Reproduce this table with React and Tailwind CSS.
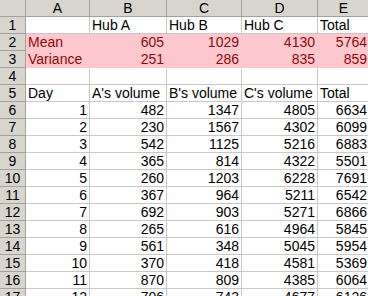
const cols = ['A', 'B', 'C', 'D', 'E'];

const rows = [
  ['', 'Hub A', 'Hub B', 'Hub C', 'Total'],
  ['Mean', 605, 1029, 4130, 5764],
  ['Variance', 251, 286, 835, 859],
  ['', '', '', '', ''],
  ['Day', "A's volume", "B's volume", "C's volume", 'Total'],
  [1, 482, 1347, 4805, 6634],
  [2, 230, 1567, 4302, 6099],
  [3, 542, 1125, 5216, 6883],
  [4, 365, 814, 4322, 5501],
  [5, 260, 1203, 6228, 7691],
  [6, 367, 964, 5211, 6542],
  [7, 692, 903, 5271, 6866],
  [8, 265, 616, 4964, 5845],
  [9, 561, 348, 5045, 5954],
  [10, 370, 418, 4581, 5369],
  [11, 870, 809, 4385, 6064],
  [12, 706, 743, 4677, 6126],
];

function Cell({ value, pink }) {
  const num = typeof value === 'number';
  return (
    <div
      className={
        'h-[17px] border-r border-b px-[2px] leading-[17px] whitespace-nowrap overflow-hidden ' +
        (num ? 'text-right ' : 'text-left ') +
        (pink
          ? 'bg-[#ffc7ce] text-[#8c0a0a] border-[#ffc7ce]'
          : 'bg-white text-black border-[#c8c8c8]')
      }
    >
      {value}
    </div>
  );
}

export default function App() {
  return (
    <div
      className="w-[368px] h-[296px] overflow-hidden bg-white text-[14px]"
      style={{ fontFamily: '"Liberation Sans", Arial, sans-serif' }}
    >
      <div className="grid grid-cols-[26px_64px_77px_75px_76px_52px] w-[370px]">
        <div className="h-[17px] bg-[#d8d5cf] border-r border-b border-[#a5a29c]" />
        {cols.map((c) => (
          <div
            key={c}
            className="h-[17px] bg-[#d8d5cf] border-r border-b border-[#a5a29c] text-center leading-[17px] text-black"
          >
            {c}
          </div>
        ))}
        {rows.map((r, i) => (
          <div key={i} className="contents">
            <div className="h-[17px] bg-[#d8d5cf] border-r border-b border-[#a5a29c] text-center leading-[17px] text-black">
              {i + 1}
            </div>
            {r.map((v, j) => (
              <Cell key={j} value={v} pink={i === 1 || i === 2} />
            ))}
          </div>
        ))}
      </div>
    </div>
  );
}
